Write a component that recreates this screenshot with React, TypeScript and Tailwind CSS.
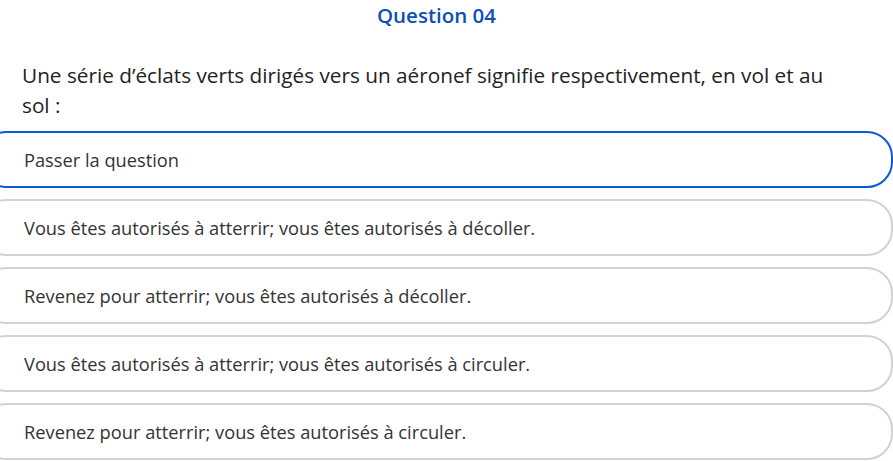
const options = [
  'Passer la question',
  'Vous êtes autorisés à atterrir; vous êtes autorisés à décoller.',
  'Revenez pour atterrir; vous êtes autorisés à décoller.',
  'Vous êtes autorisés à atterrir; vous êtes autorisés à circuler.',
  'Revenez pour atterrir; vous êtes autorisés à circuler.',
];

export default function App() {
  return (
    <div
      className="w-[893px] h-[461px] overflow-hidden bg-white"
      style={{ fontFamily: '"Open Sans", "Liberation Sans", sans-serif' }}
    >
      <div className="-ml-[20px] w-[913px]">
        <h1 className="pt-[1px] text-center text-[20.5px] leading-[28px] font-semibold text-[#0b50b4]">
          Question 04
        </h1>
        <p className="mt-[31px] pl-[42px] pr-[43px] text-[20.75px] leading-[30px] text-[#222]">
          Une série d’éclats verts dirigés vers un aéronef signifie respectivement, en vol et au sol :
        </p>
        <div className="mt-[11px] flex flex-col gap-[11px]">
          {options.map((opt, i) => (
            <button
              key={opt}
              className={
                'flex h-[57px] w-full items-center rounded-[26px] border-2 bg-white pl-[42px] text-left text-[18.25px] text-[#333] ' +
                (i === 0 ? 'border-[#0a5ad8]' : 'border-[#d2d2d2]')
              }
            >
              {opt}
            </button>
          ))}
        </div>
      </div>
    </div>
  );
}
